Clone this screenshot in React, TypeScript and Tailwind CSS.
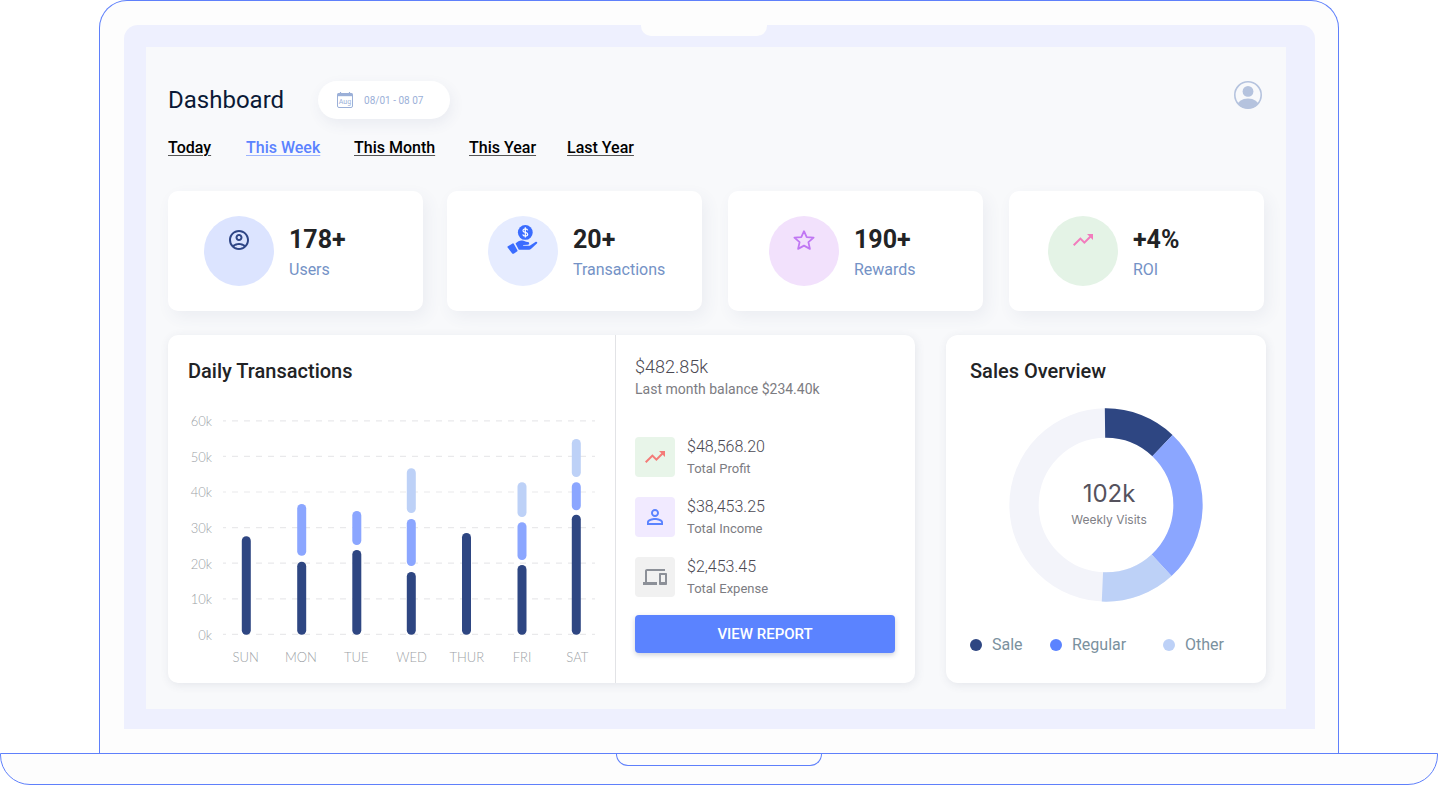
import React from "react";
import {
  MdOutlineAccountCircle,
  MdTrendingUp,
  MdPersonOutline,
  MdDevices,
} from "react-icons/md";

const font = "font-['Roboto','Liberation_Sans',sans-serif]";

function HandCoinIcon() {
  return (
    <svg className="size-8" viewBox="0 0 32 32" aria-hidden="true">
      <circle cx="18.3" cy="8.4" r="7.4" fill="#3a6cff" />
      <path
        d="M20.7 6.4C20.4 5.400 19.600 4.900 18.300 4.900c-1.400 0-2.300.7-2.300 1.800 0 2.400 4.700 1.100 4.700 3.500 0 1.100-1 1.800-2.400 1.800-1.400 0-2.300-.6-2.500-1.700M18.300 3.200v10.400"
        fill="none"
        stroke="#fff"
        strokeWidth="1.2"
      />
      <path
        d="M.9 22.200 5.600 19.500c.5-.3 1-.1 1.300.4l3.500 6.300c.3.500.1 1-.4 1.300l-3.300 2.200c-.5.3-1.200.2-1.500-.3L.6 23.500c-.3-.5-.200-1 .3-1.300Z"
        fill="#3a6cff"
      />
      <path
        d="M8.500 19.600C10.800 17.300 13 16.300 15.200 16.600c2 .2 3.300 1.500 5.300 1.500 1.900 0 2.400 2.300.5 2.600l-4.600.2c-.5 0-.5.9 0 .9h5.300c.8 0 1.200-.2 1.800-.6l4.900-3.300c1.300-.8 2.500.5 1.500 1.600l-5.700 5.200c-.9.7-1.500 1-2.700 1h-9.700L8.500 19.600Z"
        fill="#3a6cff"
      />
    </svg>
  );
}

function StarIcon() {
  return (
    <svg className="size-6" viewBox="0 0 24 24" aria-hidden="true">
      <path
        d="M12 3.200 14.700 9.100 21.600 9.600 16.400 14.100 17.900 20.900 12 17.600 6.100 20.900 7.600 14.100 2.400 9.600 9.300 9.100Z"
        fill="none"
        stroke="#c077f3"
        strokeWidth="1.8"
        strokeLinejoin="round"
      />
    </svg>
  );
}

function CalendarIcon() {
  return (
    <svg className="size-4" viewBox="0 0 16 16" aria-hidden="true">
      <rect x="0.500" y="1.500" width="15" height="14" rx="1.500" fill="none" stroke="#9bb0d8" />
      <path d="M0.500 1.200h15v3h-15z" fill="#9bb0d8" />
      <path d="M3.500 0v2M12.500 0v2" stroke="#9bb0d8" strokeWidth="1.200" />
      <text x="8" y="11.500" textAnchor="middle" fontSize="7" fill="#9bb0d8">
        Aug
      </text>
    </svg>
  );
}

function AvatarIcon() {
  return (
    <svg className="size-7" viewBox="0 0 28 28" aria-hidden="true">
      <clipPath id="avatar-clip">
        <circle cx="14" cy="14" r="13.500" />
      </clipPath>
      <circle cx="14" cy="14" r="13.200" fill="none" stroke="#b5c3de" strokeWidth="1.600" />
      <circle cx="14" cy="10.400" r="5.400" fill="#b5c3de" />
      <ellipse cx="14" cy="25" rx="11" ry="7.600" fill="#b5c3de" clipPath="url(#avatar-clip)" />
    </svg>
  );
}

const periods = ["Today", "This Week", "This Month", "This Year", "Last Year"];

type Stat = { value: string; label: string; pad: string; circle: string; icon: React.ReactNode };

const statGroups: { gap: string; size: string; stats: Stat[] }[] = [
  {
    gap: "gap-6",
    size: "flex-[534]",
    stats: [
      {
        value: "178+",
        label: "Users",
        pad: "pl-9",
        circle: "bg-[#dce4ff] pt-3",
        icon: <MdOutlineAccountCircle className="size-6 text-[#2e4585]" />,
      },
      {
        value: "20+",
        label: "Transactions",
        pad: "pl-[41px]",
        circle: "bg-[#e6ecff] pt-2",
        icon: <HandCoinIcon />,
      },
    ],
  },
  {
    gap: "gap-[26px]",
    size: "flex-[536]",
    stats: [
      {
        value: "190+",
        label: "Rewards",
        pad: "pl-[41px]",
        circle: "bg-[#f2e1fc] pt-3",
        icon: <StarIcon />,
      },
      {
        value: "+4%",
        label: "ROI",
        pad: "pl-[39px]",
        circle: "bg-[#e4f3e6] pt-3",
        icon: <MdTrendingUp className="size-6 text-[#f27cbd]" />,
      },
    ],
  },
];

function StatCard({ stat }: { stat: Stat }) {
  return (
    <article
      className={`flex h-[120px] min-w-0 gap-[15px] rounded-[10px] bg-white pt-[25px] shadow-[4px_6px_16px_rgba(70,80,130,0.07)] ${stat.pad}`}
    >
      <div className={`flex size-[70px] shrink-0 items-start justify-center rounded-full ${stat.circle}`}>
        {stat.icon}
      </div>
      <div className="pt-2">
        <p className="text-[25px] leading-8 font-bold text-[#222325]">{stat.value}</p>
        <p className="mt-[2px] text-base leading-6 text-[#7492c6]">{stat.label}</p>
      </div>
    </article>
  );
}

const levels = ["60k", "50k", "40k", "30k", "20k", "10k", "0k"];

const dark = "#2e4682";
const mid = "#8ba6ff";
const light = "#bdd1f7";

const days: { name: string; x: number; bars: [number, number, string][] }[] = [
  { name: "SUN", x: 23.3, bars: [[123.3, 221.700, dark]] },
  { name: "MON", x: 78.700, bars: [[148.700, 221.700, dark], [91, 142.700, mid]] },
  { name: "TUE", x: 133.800, bars: [[137, 221.700, dark], [98, 132, mid]] },
  { name: "WED", x: 188.300, bars: [[159, 221.700, dark], [106, 153, mid], [55.300, 100, light]] },
  { name: "THUR", x: 243.500, bars: [[120, 221.700, dark]] },
  { name: "FRI", x: 299, bars: [[152, 221.700, dark], [109.300, 147, mid], [69.300, 104, light]] },
  { name: "SAT", x: 353.300, bars: [[101.700, 221.700, dark], [69.300, 97.300, mid], [26, 64, light]] },
];

function TransactionsChart() {
  return (
    <div className="mt-7 font-['Lato',sans-serif] text-[13px] leading-4 font-light text-[#9c9fa6]">
      <div className="flex gap-[11px]">
        <div className="flex w-6 shrink-0 flex-col justify-between text-right">
          {levels.map((level) => (
            <span key={level}>{level}</span>
          ))}
        </div>
        <svg className="h-auto min-w-0 flex-1" viewBox="0 0 372 230" role="img" aria-label="Transactions per day">
          {levels.map((level, i) => (
            <line
              key={level}
              x1="0"
              x2="372"
              y1={7.800 + i * 35.600}
              y2={7.800 + i * 35.600}
              stroke="#e9e9eb"
              strokeWidth="1.200"
              strokeDasharray="6 6"
              strokeDashoffset="3"
            />
          ))}
          {days.map((day) =>
            day.bars.map(([top, bottom, fill]) => (
              <rect key={`${day.name}-${top}`} x={day.x - 4.500} y={top} width="9" height={bottom - top} rx="4.500" fill={fill} />
            )),
          )}
        </svg>
      </div>
      <div className="-mr-[10px] ml-[30px] mt-[6px] grid grid-cols-7 text-center">
        {days.map((day) => (
          <span key={day.name}>{day.name}</span>
        ))}
      </div>
    </div>
  );
}

const totals = [
  { amount: "$48,568.20", label: "Total Profit", tile: "bg-[#e8f5e9]", icon: <MdTrendingUp className="size-6 text-[#f47b78]" /> },
  { amount: "$38,453.25", label: "Total Income", tile: "bg-[#f1eaff]", icon: <MdPersonOutline className="size-6 text-[#5b83ff]" /> },
  { amount: "$2,453.45", label: "Total Expense", tile: "bg-[#f1f1f1]", icon: <MdDevices className="size-6 text-[#8c9098]" /> },
];

const cx = 97;
const ringRadius = 82;

function point(angle: number) {
  const a = (angle * Math.PI) / 180;
  return `${cx + ringRadius * Math.sin(a)} ${cx - ringRadius * Math.cos(a)}`;
}

const slices = [
  { from: -0.7, to: 43.5, color: dark },
  { from: 43.5, to: 137.3, color: mid },
  { from: 137.3, to: 182.5, color: light },
];

function SalesDonut() {
  return (
    <div className="relative mx-auto mt-[23px] size-[194px]">
      <svg viewBox="0 0 194 194" className="size-full" role="img" aria-label="Share of weekly visits">
        <g fill="none" strokeWidth="29.300">
          <circle cx={cx} cy={cx} r={ringRadius} stroke="#f3f4fa" />
          {slices.map((s) => (
            <path key={s.color} d={`M${point(s.from)}A${ringRadius} ${ringRadius} 0 0 1 ${point(s.to)}`} stroke={s.color} />
          ))}
        </g>
      </svg>
      <div className="absolute inset-0 flex flex-col items-center justify-center pb-[2px] pl-[6px] font-['Inter',sans-serif]">
        <p className="text-2xl leading-8 text-[#55525d]">102k</p>
        <p className="text-xs leading-5 text-[#808086]">Weekly Visits</p>
      </div>
    </div>
  );
}

const legend = [
  { name: "Sale", dot: "bg-[#2e4682]" },
  { name: "Regular", dot: "bg-[#5b83ff]" },
  { name: "Other", dot: "bg-[#bdd1f7]" },
];

function Dashboard() {
  return (
    <main className="bg-[#f8f9fb] pt-[34px] pr-5 pb-[26px] pl-[22px]">
      <header className="flex items-start pr-1">
        <h1 className="text-2xl leading-[38px] text-[#0b1936]">Dashboard</h1>
        <button
          type="button"
          className="ml-[34px] flex h-[38px] w-[132px] items-center gap-[11px] rounded-full bg-white pl-[19px] text-[10px] text-[#9bb0d8] shadow-[2px_5px_14px_rgba(70,80,130,0.08)]"
        >
          <CalendarIcon />
          08/01 - 08 07
        </button>
        <button type="button" aria-label="Account" className="ml-auto">
          <AvatarIcon />
        </button>
      </header>

      <nav className="mt-[17px] grid grid-cols-[78px_108px_115px_98px_auto] text-base leading-6 font-medium">
        {periods.map((period) => (
          <a
            key={period}
            href="#"
            className={`justify-self-start underline decoration-1 underline-offset-2 ${period === "This Week" ? "text-[#5b83ff] decoration-[#9db5ff]" : "text-black decoration-[#555555]"}`}
          >
            {period}
          </a>
        ))}
      </nav>

      <section className="mt-[31px] mr-[2px] flex gap-[26px]">
        {statGroups.map((group) => (
          <div key={group.size} className={`grid min-w-0 grid-cols-2 ${group.gap} ${group.size}`}>
            {group.stats.map((stat) => (
              <StatCard key={stat.label} stat={stat} />
            ))}
          </div>
        ))}
      </section>

      <section className="mt-6 flex gap-[31px]">
        <div className="flex min-w-0 flex-1 rounded-[10px] bg-white shadow-[1px_2px_10px_rgba(60,70,100,0.10)]">
          <div className="min-w-0 flex-1 px-5 pt-[22px]">
            <h2 className="text-xl leading-7 font-medium text-[#222325]">Daily Transactions</h2>
            <TransactionsChart />
          </div>
          <div className="w-[300px] shrink-0 border-l border-[#e2e3e6] pt-5 pr-5 pb-[30px] pl-[19px]">
            <p className="text-lg leading-6 font-light text-[#4b4953]">$482.85k</p>
            <p className="text-sm leading-5 text-[#7c7c82]">Last month balance $234.40k</p>
            <ul className="mt-[38px] flex flex-col gap-5">
              {totals.map((total) => (
                <li key={total.label} className="flex h-10 items-center gap-3">
                  <span className={`flex size-10 items-center justify-center rounded ${total.tile}`}>{total.icon}</span>
                  <div>
                    <p className="text-base leading-6 font-light text-[#4b4953]">{total.amount}</p>
                    <p className="text-[13px] leading-5 text-[#7c7c82]">{total.label}</p>
                  </div>
                </li>
              ))}
            </ul>
            <button
              type="button"
              className="mt-[18px] h-[38px] w-full rounded bg-[#5b83ff] text-[15px] font-medium text-white shadow-[0_2px_5px_rgba(60,70,110,0.25)]"
            >
              VIEW REPORT
            </button>
          </div>
        </div>

        <div className="w-[320px] shrink-0 rounded-[12px] bg-white px-6 pt-[22px] shadow-[1px_2px_10px_rgba(60,70,100,0.10)]">
          <h2 className="text-xl leading-7 font-medium text-[#222325]">Sales Overview</h2>
          <SalesDonut />
          <ul className="mt-[31px] grid grid-cols-[80px_113px_auto] text-base leading-6 text-[#7b919e]">
            {legend.map((item) => (
              <li key={item.name} className="flex items-center gap-[10px]">
                <span className={`size-3 rounded-full ${item.dot}`} />
                {item.name}
              </li>
            ))}
          </ul>
        </div>
      </section>
    </main>
  );
}

export default function App() {
  return (
    <div className={`bg-white antialiased ${font}`}>
      <div className="mr-[100px] ml-[99px] rounded-t-[28px] border border-b-0 border-[#5f80fb] bg-[#fdfdfd] pt-6 pr-[23px] pb-6 pl-6">
        <div className="relative rounded-t-[14px] bg-[#eef0fe] pt-[22px] pr-[29px] pb-5 pl-[22px]">
          <div className="absolute top-0 left-[43.4%] h-[11px] w-[126px] rounded-b-[10px] bg-[#fdfdfd]" />
          <Dashboard />
        </div>
      </div>
      <div className="mr-px flex h-8 justify-center rounded-b-[30px] border border-[#5f80fb] bg-[#fdfdfd]">
        <div className="h-3 w-[206px] rounded-b-[13px] border border-t-0 border-[#5f80fb]" />
      </div>
    </div>
  );
}
